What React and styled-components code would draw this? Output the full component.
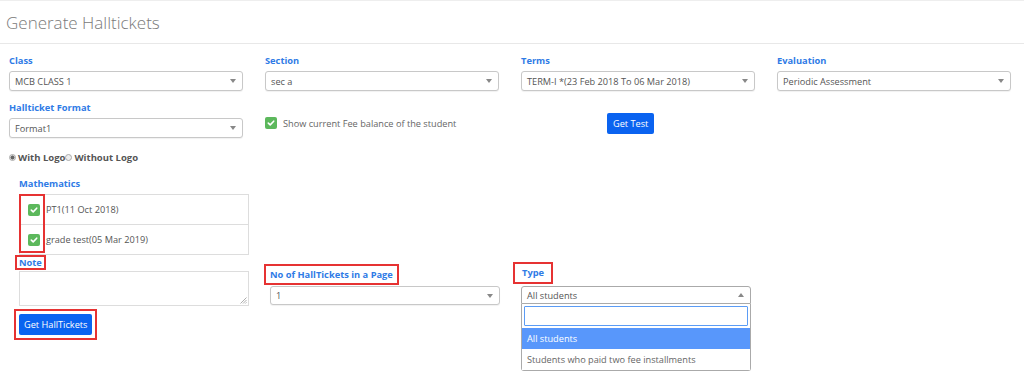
import React from 'react';
import styled, { createGlobalStyle } from 'styled-components';

const GlobalStyle = createGlobalStyle`
  body {
    margin: 0;
    background: #fff;
    font-family: "Open Sans", "Liberation Sans", sans-serif;
    color: #555;
  }
`;

const Page = styled.div`
  width: 1024px;
  height: 375px;
  overflow: hidden;
`;

const Header = styled.div`
  height: 42px;
  border-top: 1px solid #eee;
  border-bottom: 1px solid #e8e8e8;
  display: flex;
  align-items: center;
  padding-left: 6px;
`;

const Title = styled.h1`
  margin: 0;
  font-size: 17px;
  font-weight: 300;
  color: #7a7a7a;
`;

const Grid = styled.div`
  display: grid;
  grid-template-columns: repeat(4, 234px);
  column-gap: 22px;
  row-gap: 10px;
  padding: 10px 0 0 9px;
`;

const Field = styled.div`
  display: flex;
  flex-direction: column;
`;

const Label = styled.label`
  font-size: 9.3px;
  line-height: 14px;
  font-weight: 700;
  color: #2f7be6;
  margin-bottom: 3px;
`;

const Select = styled.div`
  height: ${p => p.$h || 20}px;
  box-sizing: border-box;
  border: 1px solid ${p => (p.$open ? '#aaa' : '#c8c8c8')};
  border-radius: ${p => (p.$open ? '3px 3px 0 0' : '3px')};
  box-shadow: ${p => (p.$open ? 'none' : '0 1px 1px rgba(0,0,0,0.06)')};
  display: flex;
  align-items: center;
  justify-content: space-between;
  padding: 0 6px 0 5px;
  font-size: 9.2px;
  color: #555;
  background: #fff;
`;

const Arrow = styled.span`
  width: 0;
  height: 0;
  border-left: 3px solid transparent;
  border-right: 3px solid transparent;
  ${p => (p.$up ? 'border-bottom: 4px solid #888;' : 'border-top: 4px solid #888;')}
`;

const CheckRow = styled.div`
  display: flex;
  align-items: center;
  gap: 6px;
  margin-top: 16px;
  font-size: 9.2px;
  color: #666;
  height: 12px;
`;

const Box = styled.span`
  width: 12px;
  height: 12px;
  border-radius: 2px;
  background: #5cb85c;
  display: inline-flex;
  align-items: center;
  justify-content: center;
  flex-shrink: 0;
`;

const Button = styled.button`
  display: block;
  font-family: "Open Sans", "Liberation Sans", sans-serif;
  font-size: 9.2px;
  color: #fff;
  background: #0a63f0;
  border: none;
  border-radius: 2px;
  height: 21px;
  padding: 0 ${p => p.$px || 5}px;
  cursor: pointer;
`;

const TestCell = styled.div`
  display: flex;
  align-items: flex-start;
  padding: 12px 0 0 86px;
`;

const RadioRow = styled.div`
  display: flex;
  align-items: center;
  margin: 12px 0 0 9px;
  height: 14px;
  font-size: 9.5px;
  font-weight: 700;
  color: #555;
`;

const Radio = styled.span`
  width: 7px;
  height: 7px;
  box-sizing: border-box;
  border-radius: 50%;
  border: 1px solid #aaa;
  background: ${p => (p.$checked ? 'radial-gradient(circle, #666 0 1.8px, #ddd 2.2px)' : '#eee')};
  margin-right: 2px;
`;

const Subject = styled.div`
  margin: 13px 0 0 19px;
  width: 230px;
  display: flex;
  flex-direction: column;
`;

const Table = styled.div`
  position: relative;
  border: 1px solid #ddd;
  border-bottom: none;
`;

const TRow = styled.div`
  height: 29px;
  border-bottom: 1px solid #ddd;
  display: flex;
  align-items: center;
  gap: 6px;
  padding-left: 8px;
  font-size: 9.2px;
  color: #555;
`;

const Marker = styled.div`
  position: absolute;
  left: -1px;
  top: -1px;
  width: 26px;
  height: 59px;
  box-sizing: border-box;
  border: 2px solid #e63232;
  pointer-events: none;
`;

const Bottom = styled.div`
  display: grid;
  grid-template-columns: 230px 230px 230px;
  column-gap: 21px;
  margin-left: 19px;
`;

const Column = styled.div`
  display: flex;
  flex-direction: column;
  align-items: flex-start;
  padding-top: ${p => p.$top || 0}px;
`;

const Flagged = styled.span`
  display: block;
  box-sizing: border-box;
  border: 2px solid #e63232;
  height: ${p => p.$h}px;
  padding: 0 ${p => p.$px || 2}px;
  margin-left: ${p => p.$ml || 0}px;
  font-size: 9.3px;
  line-height: ${p => p.$h - 4}px;
  font-weight: 700;
  color: #2f7be6;
`;

const TextArea = styled.div`
  position: relative;
  align-self: stretch;
  margin-top: 1px;
  height: 35px;
  border: 1px solid #ddd;
  box-sizing: border-box;
`;

const Grip = styled.svg`
  position: absolute;
  right: 1px;
  bottom: 1px;
`;

const ButtonFrame = styled.div`
  margin: 3px 0 0 -5px;
  padding: 3px;
  border: 2px solid #e63232;
  display: flex;
`;

const SelectWrap = styled.div`
  align-self: stretch;
  margin-top: ${p => p.$mt || 0}px;
`;

const Dropdown = styled.div`
  border: 1px solid #aaa;
  border-top: none;
  border-radius: 0 0 3px 3px;
  padding-top: 2px;
  background: #fff;
`;

const Search = styled.div`
  margin: 0 2px 2px;
  height: 20px;
  box-sizing: border-box;
  border: 1px solid #5b9cf5;
  border-radius: 1px;
`;

const Option = styled.div`
  height: 21px;
  display: flex;
  align-items: center;
  padding-left: 5px;
  font-size: 9.2px;
  color: ${p => (p.$active ? '#fff' : '#666')};
  background: ${p => (p.$active ? '#5897fb' : '#fff')};
`;

const Check = () => (
  <Box>
    <svg width="8" height="8" viewBox="0 0 8 8">
      <path d="M1.3 4.1 L3.2 5.9 L6.7 2.2" stroke="#fff" strokeWidth="1.6" fill="none" strokeLinecap="round" strokeLinejoin="round" />
    </svg>
  </Box>
);

const Dropdowns = [
  { label: 'Class', value: 'MCB CLASS 1' },
  { label: 'Section', value: 'sec a' },
  { label: 'Terms', value: 'TERM-I *(23 Feb 2018 To 06 Mar 2018)' },
  { label: 'Evaluation', value: 'Periodic Assessment' },
];

const tests = ['PT1(11 Oct 2018)', 'grade test(05 Mar 2019)'];

export default function App() {
  return (
    <Page>
      <GlobalStyle />
      <Header>
        <Title>Generate Halltickets</Title>
      </Header>
      <Grid>
        {Dropdowns.map(d => (
          <Field key={d.label}>
            <Label>{d.label}</Label>
            <Select>
              {d.value}
              <Arrow />
            </Select>
          </Field>
        ))}
        <Field>
          <Label>Hallticket Format</Label>
          <Select>
            Format1
            <Arrow />
          </Select>
        </Field>
        <CheckRow>
          <Check />
          Show current Fee balance of the student
        </CheckRow>
        <TestCell>
          <Button $px={6}>Get Test</Button>
        </TestCell>
      </Grid>

      <RadioRow>
        <Radio $checked />
        With Logo
        <Radio />
        Without Logo
      </RadioRow>

      <Subject>
        <Label>Mathematics</Label>
        <Table>
          {tests.map(t => (
            <TRow key={t}>
              <Check />
              {t}
            </TRow>
          ))}
          <Marker />
        </Table>
      </Subject>

      <Bottom>
        <Column>
          <Flagged $ml={-4} $h={15}>Note</Flagged>
          <TextArea>
            <Grip width="7" height="7" viewBox="0 0 7 7">
              <path d="M6.5 0.5 L0.5 6.5 M6.5 3 L3 6.5 M6.5 5.3 L5.3 6.5" stroke="#999" strokeWidth="0.8" />
            </Grip>
          </TextArea>
          <ButtonFrame>
            <Button>Get HallTickets</Button>
          </ButtonFrame>
        </Column>
        <Column $top={9}>
          <Flagged $ml={-6} $px={4} $h={21}>No of HallTickets in a Page</Flagged>
          <SelectWrap $mt={1}>
            <Select $h={19}>
              1
              <Arrow />
            </Select>
          </SelectWrap>
        </Column>
        <Column $top={7}>
          <Flagged $ml={-8} $px={7} $h={22}>Type</Flagged>
          <SelectWrap $mt={2}>
            <Select $h={18} $open>
              All students
              <Arrow $up />
            </Select>
            <Dropdown>
              <Search />
              <Option $active>All students</Option>
              <Option>Students who paid two fee installments</Option>
            </Dropdown>
          </SelectWrap>
        </Column>
      </Bottom>
    </Page>
  );
}
